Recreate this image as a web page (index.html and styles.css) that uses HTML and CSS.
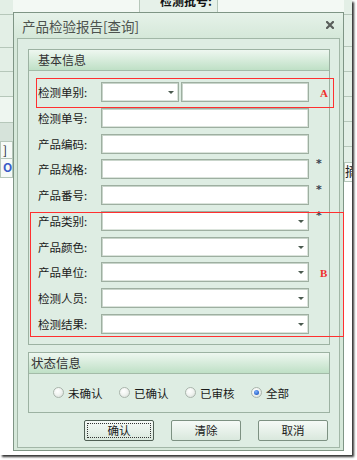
FILE: index.html
```html
<!DOCTYPE html>
<html lang="zh">
<head>
<meta charset="utf-8">
<title>产品检验报告[查询]</title>
<link rel="stylesheet" href="styles.css">
</head>
<body>
<div class="shot">
  <div class="bg">
    <div class="bg-left">
      <div class="bc h15"></div>
      <div class="bc h33"></div>
      <div class="bc h24"></div>
      <div class="bc h25"></div>
      <div class="bc h26 light"></div>
      <div class="bc h19 dim"></div>
      <div class="bc h17 cellw">]</div>
      <div class="bc h19 cellw blue">O</div>
    </div>
    <div class="bg-mid">
      <div class="bg-toprow">
        <div class="bg-blank"></div>
        <div class="bg-head">检测批号:</div>
        <div class="bg-blank"></div>
      </div>
    </div>
    <div class="bg-right">
      <div class="bc h15"></div>
      <div class="bc h32"></div>
      <div class="bc h25"></div>
      <div class="bc h25"></div>
      <div class="bc h25"></div>
      <div class="bc h25"></div>
      <div class="bc h16"></div>
      <div class="bc h19 cellw cut">摘</div>
    </div>
  </div>

  <div class="dialog">
    <div class="titlebar">
      <span class="title">产品检验报告[查询]</span>
      <svg class="close" width="8" height="8" viewBox="0 0 8 8"><path d="M1 1L7 7M7 1L1 7" stroke="#5a5f5b" stroke-width="2.2" stroke-linecap="square"/></svg>
    </div>
    <div class="client">
      <div class="group g1">
        <div class="ghead">基本信息</div>
        <div class="form">
          <span class="lbl">检测单别:</span>
          <div class="pair"><div class="field sel short"><i class="arr"></i></div><div class="field grow"></div></div>
          <span class="mark"></span>

          <span class="lbl">检测单号:</span><div class="field"></div><span class="mark"></span>
          <span class="lbl">产品编码:</span><div class="field"></div><span class="mark"></span>
          <span class="lbl">产品规格:</span><div class="field"></div><span class="mark">*</span>
          <span class="lbl">产品番号:</span><div class="field"></div><span class="mark">*</span>
          <span class="lbl">产品类别:</span><div class="field sel"><i class="arr"></i></div><span class="mark">*</span>
          <span class="lbl">产品颜色:</span><div class="field sel"><i class="arr"></i></div><span class="mark"></span>
          <span class="lbl">产品单位:</span><div class="field sel"><i class="arr"></i></div><span class="mark"></span>
          <span class="lbl">检测人员:</span><div class="field sel"><i class="arr"></i></div><span class="mark"></span>
          <span class="lbl">检测结果:</span><div class="field sel"><i class="arr"></i></div><span class="mark"></span>
        </div>
      </div>

      <div class="group g2">
        <div class="ghead h2">状态信息</div>
        <div class="radios">
          <span class="opt"><i class="radio"></i>未确认</span>
          <span class="opt"><i class="radio"></i>已确认</span>
          <span class="opt"><i class="radio"></i>已审核</span>
          <span class="opt"><i class="radio on"></i>全部</span>
        </div>
      </div>

      <div class="buttons">
        <button class="btn focus"><span>确认</span></button>
        <button class="btn"><span>清除</span></button>
        <button class="btn"><span>取消</span></button>
      </div>
    </div>

    <div class="redbox ra"><span class="tag">A</span></div>
    <div class="redbox rb"><span class="tag">B</span></div>
  </div>
</div>
</body>
</html>
```

FILE: styles.css
```css
* { box-sizing: border-box; }
html, body { margin: 0; padding: 0; background: #ffffff; }
body {
  width: 357px; height: 460px; overflow: hidden;
  font-family: "Noto Sans CJK SC", "Noto Sans", sans-serif;
}
.shot {
  position: relative;
  width: 352px; height: 455px;
  background: #ffffff;
  box-shadow: 2px 2px 2px rgba(0,0,0,0.8);
  overflow: hidden;
}

/* background application */
.bg { display: flex; height: 100%; }
.bg-left { width: 13px; display: flex; flex-direction: column; }
.bg-mid { flex: 1; }
.bg-right { width: 8px; display: flex; flex-direction: column; margin-left: auto; }
.bc { background: #e3efe6; border-bottom: 1px solid #b6c7ba; flex: none; }
.bc.light { background: #eef6f0; }
.bc.dim { background: #d6e3da; }
.bc.cellw {
  background: #f6faf7; border: 1px solid #b6c7ba; border-top: none;
  font-size: 12px; line-height: 16px; color: #222; padding-left: 2px; overflow: hidden;
}
.bc.blue { color: #3a5cc8; font-weight: bold; }
.bc.cut { padding-left: 0; font-size: 13px; border-right: none; }
.h15 { height: 15px; } .h16 { height: 16px; } .h17 { height: 17px; } .h19 { height: 19px; }
.h24 { height: 24px; } .h25 { height: 25px; } .h26 { height: 26px; } .h32 { height: 32px; } .h33 { height: 33px; }
.bg-toprow { display: flex; height: 15px; border-bottom: 1px solid #b6c7ba; }
.bg-blank { flex: 1; background: #f3f9f4; }
.bg-head {
  width: 79px; background: #e6f1e9;
  border-left: 1px solid #b6c7ba; border-right: 1px solid #b6c7ba;
  font-size: 12px; font-weight: bold; color: #111;
  line-height: 12px; padding-left: 20px; margin-top: -5px; height: 20px;
}

/* dialog window */
.dialog {
  position: absolute; left: 13px; top: 12px;
  width: 331px; height: 439px;
  border: 1px solid #7f9585;
  background: #d6e8da;
  display: flex; flex-direction: column;
}
.titlebar {
  height: 25px; flex: none;
  display: flex; align-items: center; justify-content: space-between;
  padding: 0 9px 0 8px;
  background: linear-gradient(#e6f2e9, #d5e8d9);
}
.title { font-size: 13.5px; color: #4d524e; }
.close { display: block; margin-top: -1px; }
.client {
  flex: 1;
  margin: 0 3px 3px 3px;
  border: 1px solid #a2b7a7;
  background: #deede3;
  padding: 10px 9px 6px 10px;
  display: flex; flex-direction: column;
}

.group { border: 1px solid #9cb2a2; background: #deede3; }
.ghead {
  height: 21px;
  border-bottom: 1px solid #a3bba8;
  background: linear-gradient(#eef7f0, #bfe0c6);
  font-size: 12px; line-height: 20px; color: #333;
  padding-left: 9px;
}
.ghead.h2 { padding-left: 2px; font-size: 12.5px; }

.form {
  display: grid;
  grid-template-columns: 63px 208px 1fr;
  grid-auto-rows: 20px;
  row-gap: 5.75px;
  padding: 11px 0 10px 9px;
}
.lbl { font-size: 11.5px; line-height: 20px; color: #1a1a1a; white-space: nowrap; }
.pair { display: flex; gap: 2px; }
.field {
  position: relative;
  background: #ffffff;
  border: 1px solid #9eafa1;
  box-shadow: inset 1px 1px 0 #c9d5cb, inset -1px -1px 0 #dbe4dc;
}
.field.short { width: 78px; flex: none; }
.field.grow { flex: 1; }
.arr {
  position: absolute; right: 4px; top: 8px;
  width: 0; height: 0;
  border-left: 3px solid transparent; border-right: 3px solid transparent;
  border-top: 3px solid #4a5a4f;
}
.mark {
  font-family: "DejaVu Sans", sans-serif;
  font-size: 11px; line-height: 11px; color: #3a4452; font-weight: bold;
  padding-left: 7px; margin-top: -1px;
}

.g2 { margin-top: 7px; }
.radios {
  height: 38px;
  display: flex; align-items: center; gap: 15px;
  padding-left: 24px;
  font-size: 11.5px; color: #1a1a1a;
}
.opt { display: flex; align-items: center; gap: 4px; width: 51px; white-space: nowrap; }
.opt:last-child { width: auto; }
.radio {
  width: 11px; height: 11px; border-radius: 50%;
  border: 1px solid #aab5ac;
  background: radial-gradient(circle at 40% 35%, #ffffff 0%, #f1f4f1 45%, #d3dad4 100%);
  position: relative; flex: none;
}
.radio.on::after {
  content: ""; position: absolute; left: 2px; top: 2px;
  width: 5px; height: 5px; border-radius: 50%;
  background: radial-gradient(circle at 40% 35%, #7fb2ff 0%, #2a63c8 70%, #1d4a9e 100%);
}

.buttons {
  display: flex; justify-content: flex-end; gap: 17px;
  margin-top: 7px; padding-right: 2px;
}
.btn {
  width: 70px; height: 21px; padding: 2px;
  border: 1px solid #7d9182; border-radius: 2px;
  background: linear-gradient(#f6faf7, #d9e8dd);
  font-family: inherit; font-size: 11.5px; color: #1a1a1a;
  display: flex;
}
.btn span {
  flex: 1; display: flex; align-items: center; justify-content: center;
  border: 1px dotted transparent; line-height: 13px;
}
.btn.focus { border-color: #4f5f54; }
.btn.focus span { border-color: #333; }

/* annotation overlays */
.redbox { position: absolute; border: 1px solid #ff3030; }
.ra { left: 22px; top: 65px; width: 298px; height: 30px; }
.rb { left: 16px; top: 199px; width: 314px; height: 125px; }
.tag {
  position: absolute;
  font-family: "Liberation Serif", "DejaVu Serif", serif;
  font-size: 11px; font-weight: bold; color: #f02d2d; line-height: 11px;
}
.ra .tag { left: 283px; top: 9px; }
.rb .tag { left: 289px; top: 55px; }
```
